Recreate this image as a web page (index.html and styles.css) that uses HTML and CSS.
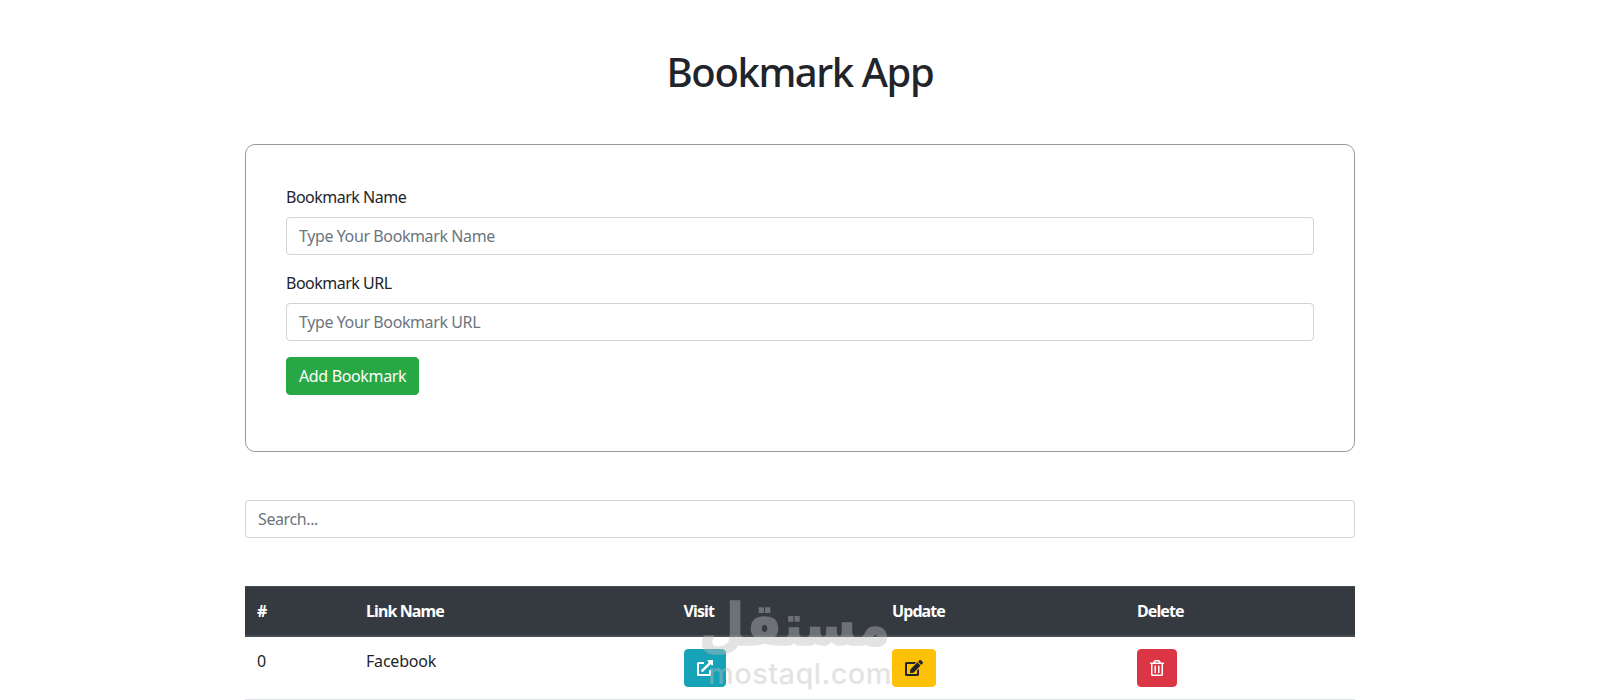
FILE: index.html
```html
<!DOCTYPE html>
<html lang="en">
<head>
<meta charset="utf-8">
<title>Bookmark App</title>
<link rel="stylesheet" href="styles.css">
</head>
<body>
<main class="container">
  <h1 class="title">Bookmark App</h1>
  <form class="panel">
    <div class="field">
      <label class="label" for="name">Bookmark Name</label>
      <input class="input" id="name" type="text" placeholder="Type Your Bookmark Name">
    </div>
    <div class="field">
      <label class="label" for="url">Bookmark URL</label>
      <input class="input" id="url" type="text" placeholder="Type Your Bookmark URL">
    </div>
    <button class="btn btn-add" type="button">Add Bookmark</button>
  </form>
  <input class="input search" type="text" placeholder="Search...">
  <table class="table">
    <thead>
      <tr>
        <th class="col-num">#</th>
        <th class="col-name">Link Name</th>
        <th class="col-visit">Visit</th>
        <th class="col-update">Update</th>
        <th class="col-delete">Delete</th>
      </tr>
    </thead>
    <tbody>
      <tr>
        <td>0</td>
        <td>Facebook</td>
        <td><button class="btn btn-visit" type="button" aria-label="Visit"><svg class="icon" width="16" height="16" viewBox="0 0 512 512"><path d="M432,320H400a16,16,0,0,0-16,16V448H64V128H208a16,16,0,0,0,16-16V80a16,16,0,0,0-16-16H48A48,48,0,0,0,0,112V464a48,48,0,0,0,48,48H400a48,48,0,0,0,48-48V336A16,16,0,0,0,432,320ZM488,0h-128c-21.37,0-32.05,25.91-17,41l35.73,35.73L135,320.37a24,24,0,0,0,0,34L157.67,377a24,24,0,0,0,34,0L435.28,133.32,471,169c15,15,41,4.5,41-17V24A24,24,0,0,0,488,0Z"/></svg></button></td>
        <td><button class="btn btn-update" type="button" aria-label="Update"><svg class="icon" width="18" height="16" viewBox="0 0 576 512"><path d="M402.6 83.2l90.2 90.2c3.8 3.8 3.8 10 0 13.8L274.4 405.6l-92.8 10.3c-12.4 1.4-22.9-9.1-21.5-21.5l10.3-92.8L388.8 83.2c3.8-3.8 10-3.8 13.8 0zm162-22.9l-48.8-48.8c-15.2-15.2-39.9-15.2-55.2 0l-35.4 35.4c-3.8 3.8-3.8 10 0 13.8l90.2 90.2c3.8 3.8 10 3.8 13.8 0l35.4-35.4c15.2-15.3 15.2-40 0-55.2zM384 346.2V448H64V128h229.8c3.2 0 6.2-1.3 8.5-3.5l40-40c7.6-7.6 2.2-20.5-8.5-20.5H48C21.5 64 0 85.5 0 112v352c0 26.5 21.5 48 48 48h352c26.5 0 48-21.5 48-48V306.2c0-10.7-12.9-16-20.5-8.5l-40 40c-2.2 2.3-3.5 5.3-3.5 8.5z"/></svg></button></td>
        <td><button class="btn btn-delete" type="button" aria-label="Delete"><svg class="icon" width="14" height="16" viewBox="0 0 448 512"><path d="M268 416h24a12 12 0 0 0 12-12V188a12 12 0 0 0-12-12h-24a12 12 0 0 0-12 12v216a12 12 0 0 0 12 12zM432 80h-82.41l-34-56.7A48 48 0 0 0 274.41 0H173.59a48 48 0 0 0-41.16 23.3L98.41 80H16A16 16 0 0 0 0 96v16a16 16 0 0 0 16 16h16v336a48 48 0 0 0 48 48h288a48 48 0 0 0 48-48V128h16a16 16 0 0 0 16-16V96a16 16 0 0 0-16-16zM171.84 50.91A6 6 0 0 1 177 48h94a6 6 0 0 1 5.15 2.91L293.61 80H154.39zM368 464H80V128h288zm-212-48h24a12 12 0 0 0 12-12V188a12 12 0 0 0-12-12h-24a12 12 0 0 0-12 12v216a12 12 0 0 0 12 12z"/></svg></button></td>
      </tr>
    </tbody>
  </table>
</main>
<div class="watermark" aria-hidden="true">
  <div class="wm-ar" lang="ar" dir="rtl">مستقل</div>
  <div class="wm-en">mostaql.com</div>
</div>
</body>
</html>
```
FILE: styles.css
```css
* { box-sizing: border-box; }
html, body { margin: 0; padding: 0; height: 700px; overflow: hidden; background: #fff; }
body {
  position: relative;
  font-family: "Noto Sans", "Open Sans", sans-serif;
  font-size: 16px;
  line-height: 24px;
  color: #212529;
}
.container { width: 1110px; margin: 0 auto; padding-top: 48px; }
.title {
  margin: 0 0 48px;
  font-size: 40px;
  line-height: 48px;
  font-weight: 500;
  letter-spacing: -1.4px;
  text-align: center;
}
.panel {
  height: 308px;
  margin-bottom: 48px;
  padding: 40px;
  border: 1px solid #999;
  border-radius: 10px;
}
.field { margin-bottom: 16px; }
.label { display: block; margin-bottom: 8px; letter-spacing: -0.5px; }
.input {
  display: block;
  width: 100%;
  height: 38px;
  padding: 6px 12px;
  border: 1px solid #ced4da;
  border-radius: 4px;
  background: #fff;
  color: #495057;
  font: inherit;
  letter-spacing: -0.4px;
  outline: none;
}
.input::placeholder { color: #6c757d; opacity: 1; }
.search { margin-bottom: 48px; }
.btn {
  display: inline-flex;
  align-items: center;
  justify-content: center;
  height: 38px;
  padding: 6px 12px;
  border: 1px solid transparent;
  border-radius: 4px;
  font: inherit;
  letter-spacing: -0.35px;
  color: #fff;
}
.btn-add { background: #28a745; border-color: #28a745; }
.btn-visit { background: #17a2b8; border-color: #17a2b8; }
.btn-update { background: #ffc107; border-color: #ffc107; color: #212529; }
.btn-delete { background: #dc3545; border-color: #dc3545; }
.icon { display: block; fill: currentColor; }
.table {
  width: 100%;
  table-layout: fixed;
  border-collapse: collapse;
}
.table th, .table td { padding: 12px; text-align: left; vertical-align: top; }
.table th {
  background: #343a40;
  color: #fff;
  font-weight: 700;
  letter-spacing: -0.9px;
  border-top: 1px solid #454d55;
  border-bottom: 2px solid #454d55;
}
.table td { border-bottom: 1px solid #dee2e6; letter-spacing: -0.2px; }
.col-num { width: 109px; }
.col-name { width: 317.5px; }
.col-visit { width: 208.5px; }
.col-update { width: 245px; }
.col-delete { width: 230px; }
.watermark {
  position: absolute;
  left: 700px;
  top: 592px;
  width: 200px;
  text-align: center;
  color: #bebebe;
  opacity: 0.42;
  pointer-events: none;
}
.wm-ar {
  height: 66px;
  font-family: "DejaVu Sans", sans-serif;
  font-weight: 700;
  font-size: 58px;
  line-height: 66px;
  -webkit-text-stroke: 1.5px #bebebe;
  transform: scaleX(0.9);
}
.wm-en {
  font-family: "Inter", sans-serif;
  font-size: 29px;
  font-weight: 500;
  line-height: 32px;
  letter-spacing: 0.4px;
  white-space: nowrap;
}
```
